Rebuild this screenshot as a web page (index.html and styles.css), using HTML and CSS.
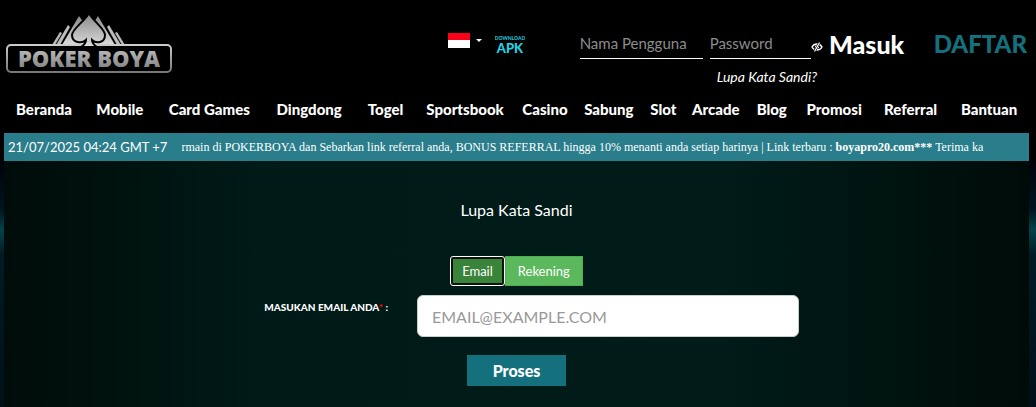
FILE: index.html
```
<!DOCTYPE html>
<html lang="id">
<head>
  <meta charset="UTF-8" />
  <title>Poker Boya - Lupa Kata Sandi</title>
  <meta name="viewport" content="width=device-width, initial-scale=1.0" />
  <link rel="stylesheet" href="styles.css">
</head>
<body>

  <!-- Header -->
  <header class="header">
    <a class="logo" href="#" aria-label="Poker Boya">
      <svg width="166" height="60" viewBox="0 0 166 60">
        <defs>
          <linearGradient id="spade" x1="0" y1="0" x2="0" y2="1">
            <stop offset="0" stop-color="#888" />
            <stop offset="1" stop-color="#ddd" />
          </linearGradient>
          <linearGradient id="frame" x1="0" y1="0" x2="0" y2="1">
            <stop offset="0" stop-color="#ccc" />
            <stop offset="1" stop-color="#777" />
          </linearGradient>
        </defs>
        <g fill="#bbb">
          <path d="M46 32 L54 19 L56 20 L49 32Z" />
          <path d="M50 32 L62 12 L64 14 L54 32Z" />
          <path d="M56 32 L73 3 L83 17 L92 3 L109 32Z" fill="url(#spade)" />
          <path d="M111 32 L101 14 L103 12 L115 32Z" />
          <path d="M116 32 L109 20 L111 19 L119 32Z" />
        </g>
        <rect x="1" y="32" width="164" height="27" rx="4" fill="#000" stroke="url(#frame)" stroke-width="2" />
        <path d="M83 0 C79 8 66 16 66 22 C66 30 76 31 80 27 C80 30 78 32 75 34 H91 C88 32 86 30 86 27 C90 31 99 30 99 22 C99 16 87 8 83 0Z" fill="url(#spade)" stroke="#000" stroke-width="2" />
        <text class="logo-text" x="83" y="54" text-anchor="middle" fill="url(#frame)">POKER BOYA</text>
      </svg>
    </a>

    <div class="tools">
      <button class="lang-btn" type="button" aria-label="Bahasa Indonesia">
        <span class="flag"></span>
        <span class="caret"></span>
      </button>
      <a class="apk" href="#" aria-label="Download APK">
        <svg width="30" height="20" viewBox="0 0 30 20">
          <text class="apk-small" x="15" y="5" text-anchor="middle">DOWNLOAD</text>
          <text class="apk-big" x="15" y="18" text-anchor="middle">APK</text>
        </svg>
      </a>
    </div>

    <form class="login">
      <div class="login-row">
        <input class="login-input user" type="text" placeholder="Nama Pengguna" aria-label="Nama Pengguna" />
        <input class="login-input pass" type="password" placeholder="Password" aria-label="Password" />
        <button class="eye-btn" type="button" aria-label="Tampilkan password">
          <svg width="12" height="10" viewBox="0 0 12 10" fill="none" stroke="#fff">
            <path d="M1 5 C3 1 9 1 11 5 C9 9 3 9 1 5Z" stroke-width="1.3" />
            <circle cx="6" cy="5" r="1.6" fill="#fff" />
            <path d="M3.5 9.5 L8.5 .5" stroke="#000" stroke-width="2.4" />
            <path d="M3.5 9.5 L8.5 .5" stroke-width="1.2" />
          </svg>
        </button>
        <button class="masuk" type="submit">Masuk</button>
        <a class="daftar" href="#">DAFTAR</a>
      </div>
      <a class="forgot" href="#">Lupa Kata Sandi?</a>
    </form>
  </header>

  <!-- Menu -->
  <nav class="menu">
    <a href="#">Beranda</a>
    <a href="#">Mobile</a>
    <a href="#">Card Games</a>
    <a href="#">Dingdong</a>
    <a href="#">Togel</a>
    <a href="#">Sportsbook</a>
    <a href="#">Casino</a>
    <a href="#">Sabung</a>
    <a href="#">Slot</a>
    <a href="#">Arcade</a>
    <a href="#">Blog</a>
    <a href="#">Promosi</a>
    <a href="#">Referral</a>
    <a href="#">Bantuan</a>
  </nav>

  <!-- Running text -->
  <div class="news">
    <span class="clock">21/07/2025 04:24 GMT +7</span>
    <div class="ticker">rmain di POKERBOYA dan Sebarkan link referral anda, BONUS REFERRAL hingga 10% menanti anda setiap harinya | Link terbaru : <b>boyapro20.com***</b> Terima ka</div>
  </div>

  <!-- Forgot password -->
  <div class="backdrop">
    <main class="panel">
      <h1>Lupa Kata Sandi</h1>
      <div class="tabs">
        <button class="tab active" type="button">Email</button>
        <button class="tab" type="button">Rekening</button>
      </div>
      <form class="reset-form">
        <label for="email">MASUKAN EMAIL ANDA<span class="required">*</span> :</label>
        <input type="email" id="email" name="email" placeholder="EMAIL@EXAMPLE.COM" required />
        <button class="proses" type="submit">Proses</button>
      </form>
    </main>
  </div>

</body>
</html>
```

FILE: styles.css
```
* {
  box-sizing: border-box;
}
body {
  font-family: Lato, sans-serif;
  background: #000;
  color: #fff;
  margin: 0;
  min-height: 100vh;
  display: flex;
  flex-direction: column;
}
a {
  color: #fff;
  text-decoration: none;
}
button {
  font-family: inherit;
  color: #fff;
  border: none;
  padding: 0;
  background: none;
  cursor: pointer;
}
input {
  font-family: inherit;
}

/* Header */
.header {
  display: flex;
  align-items: flex-start;
  padding: 13px 9px 0 6px;
  height: 94px;
}
.logo svg,
.apk svg,
.eye-btn svg {
  display: block;
}
.logo-text {
  font: 800 22px "Open Sans", sans-serif;
}
.tools {
  display: flex;
  gap: 13px;
  margin: 20px 0 0 auto;
}
.lang-btn {
  display: flex;
  align-items: center;
  gap: 6px;
  height: 15px;
}
.flag {
  width: 22px;
  height: 15px;
  background: linear-gradient(#ff0018 50%, #fff 50%);
}
.caret {
  border: 3px solid transparent;
  border-top-color: #fff;
  border-bottom: none;
}
.apk {
  margin-top: 2px;
}
.apk text {
  fill: #20d5e4;
}
.apk-small {
  font: 700 5px Lato, sans-serif;
}
.apk-big {
  font: 900 13px Lato, sans-serif;
}
.login {
  margin: 15px 0 0 55px;
}
.login-row {
  display: flex;
  align-items: center;
}
.login-input {
  height: 31px;
  padding: 0 0 1px;
  font-size: 15px;
  color: #fff;
  background: transparent;
  border: none;
  border-bottom: 1px solid #fff;
}
.login-input::placeholder {
  color: #8c8c8c;
}
.user {
  width: 123px;
  margin-right: 7px;
}
.pass {
  width: 101px;
}
.eye-btn {
  margin-top: 7px;
}
.masuk {
  margin-left: 6px;
  width: 76px;
  font-size: 25px;
  font-weight: 900;
}
.daftar {
  margin-left: 29px;
  font-size: 24px;
  font-weight: 900;
  color: #15707e;
}
.forgot {
  display: block;
  margin: 9px 0 0 137px;
  font-size: 14px;
  line-height: 18px;
  font-style: italic;
}

/* Menu */
.menu {
  display: grid;
  grid-template-columns: 80fr 72fr 107fr 93fr 60fr 99fr 61fr 67fr 42fr 63fr 49fr 76fr 77fr 80fr;
  margin: 0 7px 0 4px;
  padding-bottom: 9px;
  font-size: 15px;
  line-height: 30px;
  font-weight: 900;
  text-align: center;
  white-space: nowrap;
}

/* Running text */
.news {
  display: flex;
  align-items: center;
  gap: 14px;
  height: 28px;
  margin: 0 7px 0 4px;
  padding: 0 4px;
  background: #2a7d8b;
  white-space: nowrap;
}
.clock {
  font-size: 13px;
  line-height: 24px;
}
.ticker {
  flex: 1;
  overflow: hidden;
  font-family: "Liberation Serif", serif;
  font-size: 12px;
  line-height: 20px;
}

/* Forgot password */
.backdrop {
  flex: 1;
  display: flex;
  padding: 0 7px 0 4px;
  background: linear-gradient(#000208, #001520 20%, #05424a 28%, #001b26 38%, #001018);
}
.panel {
  flex: 1;
  padding: 38px 0 20px;
  text-align: center;
  background: linear-gradient(90deg, #000c09, #00130f 12%, #001a17 25%, #001b18 70%, #00130f 88%, #000b08);
}
h1 {
  margin: 0 0 36px;
  font-size: 16px;
  line-height: 21px;
  font-weight: 400;
}
.tabs {
  display: flex;
  justify-content: center;
  margin-bottom: 9px;
}
.tab {
  height: 30px;
  padding: 0 12px;
  font-size: 13px;
  background: #5cb85c;
  border: 1px solid #4cae4c;
}
.active {
  padding: 0 10px;
  background: #398439;
  border: 2px solid #111;
  border-radius: 3px;
  outline: 1px solid #fff;
  outline-offset: -1px;
  box-shadow: inset 0 0 0 1px #111;
}
.reset-form {
  display: grid;
  grid-template-columns: 384fr 382fr 201fr;
  column-gap: 29px;
  row-gap: 18px;
}
.reset-form label {
  padding-top: 5px;
  font-size: 10px;
  line-height: 14px;
  font-weight: 900;
  text-align: right;
}
.required {
  color: #f00;
}
.reset-form input {
  height: 42px;
  padding: 0 14px;
  font-size: 16px;
  background: #fff;
  border: 1px solid #ccc;
  border-radius: 6px;
}
.reset-form input::placeholder {
  color: #999;
}
.proses {
  grid-column: 1 / -1;
  justify-self: center;
  width: 99px;
  height: 31px;
  font-size: 16px;
  font-weight: 900;
  background: #15707e;
}
```
